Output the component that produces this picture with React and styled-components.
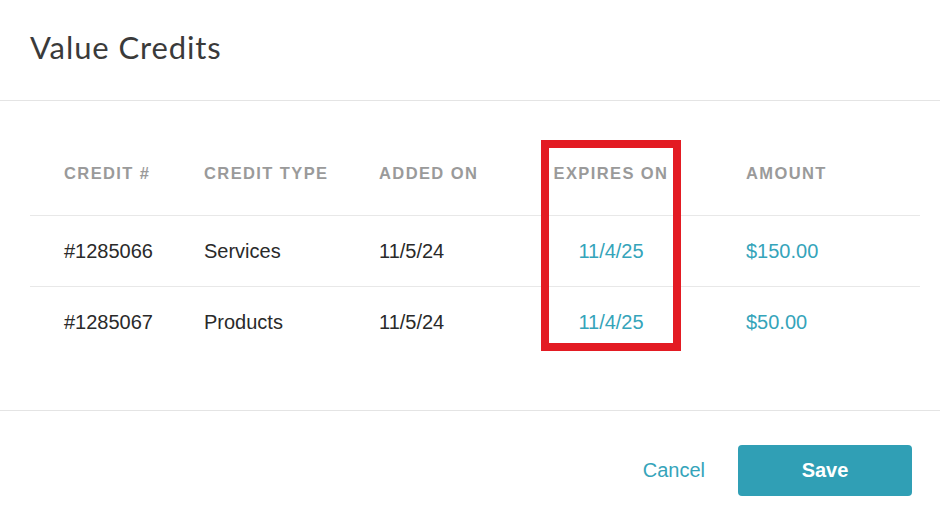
import React from 'react';
import styled, { createGlobalStyle } from 'styled-components';

const GlobalStyle = createGlobalStyle`
  html, body {
    margin: 0;
    padding: 0;
    background: #ffffff;
  }
  body {
    font-family: 'Liberation Sans', Arial, sans-serif;
  }
`;

const TEAL = '#35a4ba';

const credits = [
  { id: '#1285066', type: 'Services', added: '11/5/24', expires: '11/4/25', amount: '$150.00' },
  { id: '#1285067', type: 'Products', added: '11/5/24', expires: '11/4/25', amount: '$50.00' },
];

const Modal = styled.div`
  width: 940px;
  height: 515px;
  background: #fff;
  display: flex;
  flex-direction: column;
`;

const Header = styled.header`
  height: 101px;
  box-sizing: border-box;
  padding: 28px 30px 0;
  border-bottom: 1px solid #e4e4e4;
`;

const Title = styled.h1`
  margin: 0;
  font-family: Lato, 'Open Sans', sans-serif;
  font-weight: 400;
  font-size: 31px;
  color: #3a3a3a;
  letter-spacing: 0.9px;
`;

const Body = styled.section`
  position: relative;
  box-sizing: border-box;
  height: 310px;
  padding: 31px 20px 0 30px;
  border-bottom: 1px solid #e4e4e4;
`;

const Row = styled.div`
  display: grid;
  grid-template-columns: 140px 175px 162px 140px 1fr;
  align-items: center;
  padding-left: 34px;
  height: ${({ $head }) => ($head ? '84px' : '71px')};
  border-bottom: ${({ $last }) => ($last ? 'none' : '1px solid #e8e8e8')};
  box-sizing: border-box;
`;

const HeadCell = styled.div`
  font-size: 16.5px;
  font-weight: 700;
  letter-spacing: 1.4px;
  color: #9a9a9a;
  text-align: ${({ $center }) => ($center ? 'center' : 'left')};
  padding-left: ${({ $pad }) => $pad || 0};
  white-space: nowrap;
`;

const Cell = styled.div`
  font-size: 20px;
  color: ${({ $accent }) => ($accent ? TEAL : '#2a2a2a')};
  text-align: ${({ $center }) => ($center ? 'center' : 'left')};
  padding-left: ${({ $pad }) => $pad || 0};
  white-space: nowrap;
`;

// annotation box drawn over the "Expires on" column
const Highlight = styled.div`
  position: absolute;
  left: 541px;
  top: 39px;
  width: 140px;
  height: 211px;
  box-sizing: border-box;
  border: 8px solid #e31b23;
  pointer-events: none;
`;

const Footer = styled.footer`
  flex: 1;
  display: flex;
  align-items: center;
  justify-content: flex-end;
  gap: 33px;
  padding: 14px 28px 0 0;
`;

const CancelButton = styled.button`
  border: none;
  background: none;
  padding: 0;
  font-family: 'Liberation Sans', Arial, sans-serif;
  font-size: 20px;
  color: ${TEAL};
  cursor: pointer;
`;

const SaveButton = styled.button`
  width: 174px;
  height: 51px;
  border: none;
  border-radius: 4px;
  background: #309fb5;
  color: #fff;
  font-family: 'Liberation Sans', Arial, sans-serif;
  font-size: 20px;
  font-weight: 700;
  cursor: pointer;
`;

export default function App() {
  return (
    <>
      <GlobalStyle />
      <Modal>
        <Header>
          <Title>Value Credits</Title>
        </Header>
        <Body>
          <Row $head>
            <HeadCell>CREDIT #</HeadCell>
            <HeadCell>CREDIT TYPE</HeadCell>
            <HeadCell>ADDED ON</HeadCell>
            <HeadCell $center>EXPIRES ON</HeadCell>
            <HeadCell $pad="65px">AMOUNT</HeadCell>
          </Row>
          {credits.map((c, i) => (
            <Row key={c.id} $last={i === credits.length - 1}>
              <Cell>{c.id}</Cell>
              <Cell>{c.type}</Cell>
              <Cell>{c.added}</Cell>
              <Cell $accent $center>{c.expires}</Cell>
              <Cell $accent $pad="65px">{c.amount}</Cell>
            </Row>
          ))}
          <Highlight />
        </Body>
        <Footer>
          <CancelButton>Cancel</CancelButton>
          <SaveButton>Save</SaveButton>
        </Footer>
      </Modal>
    </>
  );
}
